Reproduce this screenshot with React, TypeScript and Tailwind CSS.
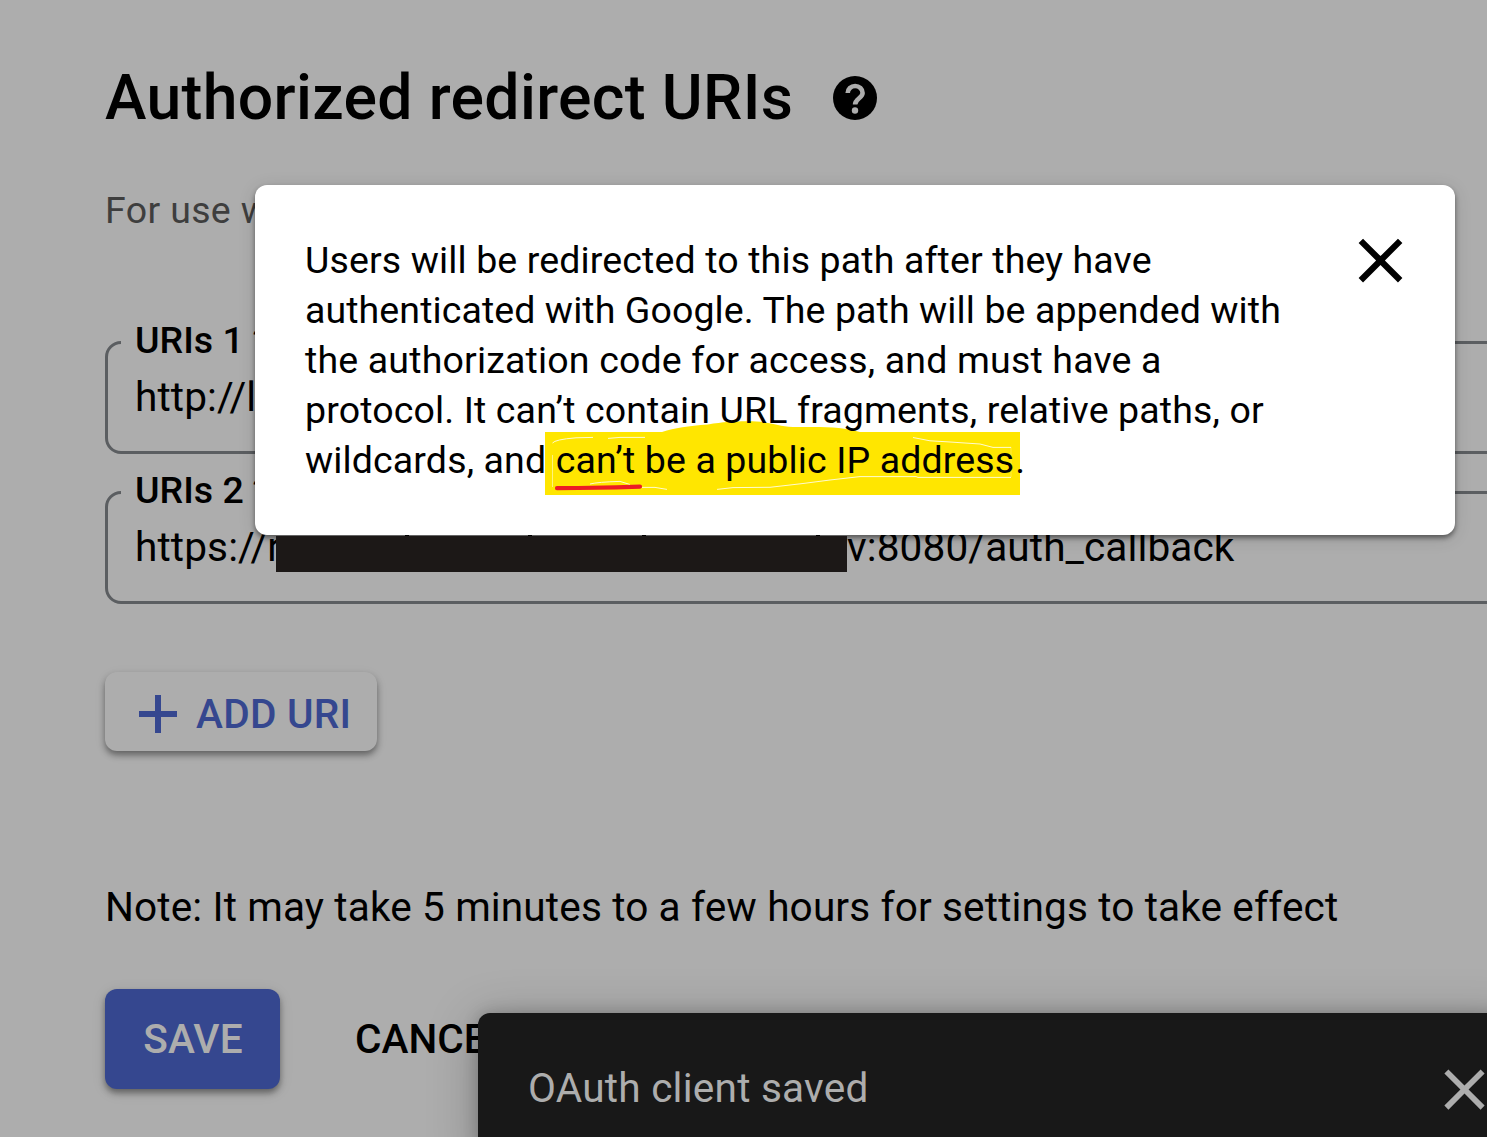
import React from "react";

function CloseIcon({ className }: { className: string }) {
  return (
    <svg viewBox="0 0 24 24" fill="currentColor" className={className}>
      <path d="M19 6.41 17.59 5 12 10.59 6.41 5 5 6.41 10.59 12 5 17.59 6.41 19 12 13.41 17.59 19 19 17.59 13.41 12z" />
    </svg>
  );
}

function HelpIcon() {
  return (
    <svg viewBox="0 0 44 44" className="size-[44px] shrink-0">
      <circle cx="22" cy="22" r="22" fill="#000" />
      <path d="M14.7 17a7.4 7 0 0 1 14.9 0c0 5-7.5 5.6-7.5 11.6" fill="none" stroke="#adadad" strokeWidth="4.6" />
      <circle cx="22" cy="34.5" r="3.2" fill="#adadad" />
    </svg>
  );
}

function Highlight() {
  return (
    <svg viewBox="0 0 480 80" className="absolute left-[288px] top-[232px] h-[80px] w-[480px]">
      <path d="M2 15H119C132 11 145 9 165 7.5C180 5 190 4.3 204 4.3C230 4.3 234 10 250 10H270C290 10 303 11 317 15H477V78H2z" fill="#ffe600" />
      <g fill="none" stroke="#fffbd0" strokeWidth="1">
        <path d="M9.5 26Q12 22.5 33 20.8L50 20.4M65 21.4L77 20.4H102" />
        <path d="M9.5 38V70" strokeOpacity="0.6" />
        <path d="M47 67Q55 65 77 64.4L87 67.5M99 70.4H112L124 72.4" />
        <path d="M174 72.4L190 70.6L227 70.3L260 66.5L287 63L317 59.6H373L375 60.4H468" />
        <path d="M370 20.5L387 23.8L404 24.8L437 27L450 30.4H468" />
        <path d="M468 30V60" strokeOpacity="0.3" />
      </g>
    </svg>
  );
}

function UriField({ label, children }: { label: string; children: React.ReactNode }) {
  return (
    <fieldset className="-mr-6 h-[134px] rounded-[16px] border-[3px] border-[#5b5e61]">
      <legend className="ml-[13px] h-[44px] whitespace-nowrap px-[14px] text-[37.5px] font-medium leading-[40px]">
        {label}
      </legend>
      <div className="flex h-[50px] items-center whitespace-nowrap pl-[27px] pt-[15px] text-[40.6px] leading-[50px] tracking-[0.1px]">
        {children}
      </div>
    </fieldset>
  );
}

export default function App() {
  return (
    <div className="relative h-[1137px] w-full overflow-hidden bg-[#adadad] font-[Roboto,sans-serif] text-black">
      <main className="flex flex-col pl-[105px] pt-[60px]">
        <div className="flex h-[75px] items-center">
          <h1 className="w-[728px] whitespace-nowrap text-[62.5px] font-medium leading-[74px] tracking-[0.33px]">Authorized redirect URIs</h1>
          <HelpIcon />
        </div>
        <p className="mt-[50px] h-[50px] whitespace-nowrap text-[37.5px] leading-[50px] tracking-[0.35px] text-[#3e3e3e]">For use with</p>
        <div className="mt-[85px] flex flex-col gap-[16px]">
          <UriField label="URIs 1 *">
            <span>http://l</span>
          </UriField>
          <UriField label="URIs 2 *">
            <span>https://r</span>
            <span className="absolute left-[847px]">v:8080/auth_callback</span>
          </UriField>
        </div>
        <button className="mt-[68px] flex h-[79px] w-[272px] items-center rounded-[12px] pl-[34px] text-[40.6px] font-medium text-[#35478f] shadow-[0_4px_6px_rgba(0,0,0,0.4),0_3px_14px_rgba(0,0,0,0.06)]">
          <svg viewBox="0 0 38 38" className="mt-[5px] size-[38px]" fill="currentColor">
            <path d="M16 0h6v16h16v6H22v16h-6V22H0v-6h16z" />
          </svg>
          <span className="ml-[19px] mt-[5px] whitespace-nowrap tracking-[0.25px]">ADD URI</span>
        </button>
        <p className="mt-[131px] whitespace-nowrap text-[40.6px] leading-[50px] tracking-[0.12px]">Note: It may take 5 minutes to a few hours for settings to take effect</p>
        <div className="mt-[57px] flex h-[100px] items-center gap-[75px] text-[40.6px] font-medium">
          <button className="flex h-[100px] w-[175px] items-center justify-center rounded-[12px] bg-[#35478f] pl-px tracking-[0.2px] text-[#adadad] shadow-[0_4px_6px_rgba(0,0,0,0.4),0_3px_16px_rgba(0,0,0,0.08)]">SAVE</button>
          <button>CANCEL</button>
        </div>
      </main>

      <div className="absolute left-[255px] top-[185px] h-[350px] w-[1200px] rounded-[12px] bg-white p-[50px] shadow-[0_3px_5px_rgba(0,0,0,0.45),0_3px_18px_rgba(0,0,0,0.12)]">
        <Highlight />
        <p className="relative whitespace-nowrap text-[37.5px] leading-[50px]">
          <span className="tracking-[0.13px]">Users will be redirected to this path after they have</span><br />
          <span className="tracking-[0.09px]">authenticated with Google. The path will be appended with</span><br />
          <span className="tracking-[0.17px]">the authorization code for access, and must have a</span><br />
          <span className="tracking-[0.13px]">protocol. It can’t contain URL fragments, relative paths, or</span><br />
          <span className="tracking-[0.13px]">wildcards, and can’t be a public IP address<span className="ml-px">.</span></span>
        </p>
        <svg viewBox="0 0 90 8" className="absolute left-[299px] top-[298px] h-[8px] w-[90px]">
          <path d="M3 5.2L24 5L62 4.4L86 3.6" fill="none" stroke="#ed1c24" strokeWidth="4.2" strokeLinecap="round" />
        </svg>
        <button className="absolute left-[1088px] top-[38px]"><CloseIcon className="size-[75px]" /></button>
      </div>

      <div className="absolute left-[276px] top-[536px] h-[36px] w-[571px] bg-[#1c1817]">
        <i className="absolute -top-px left-[129px] h-px w-[4px] bg-black" />
        <i className="absolute -top-px left-[252px] h-px w-[4px] bg-black" />
        <i className="absolute -top-px left-[366px] h-px w-[4px] bg-black" />
        <i className="absolute -top-px left-[540px] h-px w-[4px] bg-black" />
      </div>

      <div className="absolute left-[478px] top-[1013px] flex h-[150px] w-[1040px] rounded-[12px] bg-[#181818] pl-[50px] pt-[50px] text-[#adadad] shadow-[0_8px_50px_rgba(0,0,0,0.25),0_0_16px_rgba(0,0,0,0.2)]">
        <span className="whitespace-nowrap text-[40.6px] leading-[50px] tracking-[0.22px]">OAuth client saved</span>
        <button className="absolute left-[952px] top-[42px]"><CloseIcon className="size-[69px]" /></button>
      </div>
    </div>
  );
}
